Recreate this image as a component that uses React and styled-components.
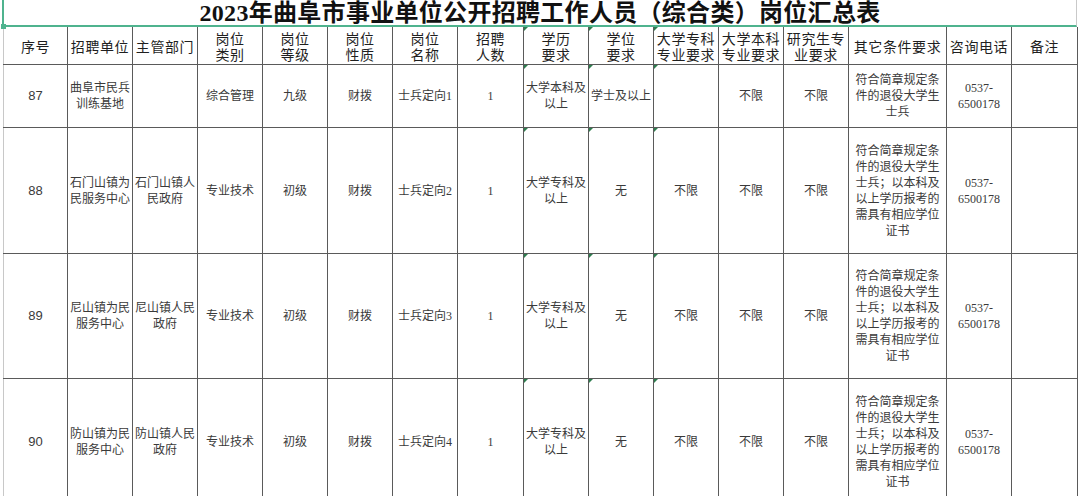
import styled, { createGlobalStyle } from "styled-components";

const GlobalStyle = createGlobalStyle`
  html, body {
    margin: 0;
    padding: 0;
    background: #ffffff;
  }
  body {
    font-family: "Noto Sans CJK SC", sans-serif;
  }
`;

const columns = [
  { title: "序号", width: 64 },
  { title: "招聘单位", width: 65 },
  { title: "主管部门", width: 65 },
  { title: "岗位\n类别", width: 65 },
  { title: "岗位\n等级", width: 65 },
  { title: "岗位\n性质", width: 65 },
  { title: "岗位\n名称", width: 65 },
  { title: "招聘\n人数", width: 66 },
  { title: "学历\n要求", width: 65, flag: true },
  { title: "学位\n要求", width: 65, flag: true },
  { title: "大学专科\n专业要求", width: 65, flag: true },
  { title: "大学本科\n专业要求", width: 65 },
  { title: "研究生专\n业要求", width: 65 },
  { title: "其它条件要求", width: 98 },
  { title: "咨询电话", width: 65 },
  { title: "备注", width: 66 },
];

const longNote =
  "符合简章规定条\n件的退役大学生\n士兵；以本科及\n以上学历报考的\n需具有相应学位\n证书";

const rows = [
  {
    height: 63,
    cells: [
      "87",
      "曲阜市民兵\n训练基地",
      "",
      "综合管理",
      "九级",
      "财拨",
      "士兵定向1",
      "1",
      "大学本科及\n以上",
      "学士及以上",
      "",
      "不限",
      "不限",
      "符合简章规定条\n件的退役大学生\n士兵",
      "0537-\n6500178",
      "",
    ],
  },
  {
    height: 126,
    cells: [
      "88",
      "石门山镇为\n民服务中心",
      "石门山镇人\n民政府",
      "专业技术",
      "初级",
      "财拨",
      "士兵定向2",
      "1",
      "大学专科及\n以上",
      "无",
      "不限",
      "不限",
      "不限",
      longNote,
      "0537-\n6500178",
      "",
    ],
  },
  {
    height: 125,
    cells: [
      "89",
      "尼山镇为民\n服务中心",
      "尼山镇人民\n政府",
      "专业技术",
      "初级",
      "财拨",
      "士兵定向3",
      "1",
      "大学专科及\n以上",
      "无",
      "不限",
      "不限",
      "不限",
      longNote,
      "0537-\n6500178",
      "",
    ],
  },
  {
    height: 126,
    cells: [
      "90",
      "防山镇为民\n服务中心",
      "防山镇人民\n政府",
      "专业技术",
      "初级",
      "财拨",
      "士兵定向4",
      "1",
      "大学专科及\n以上",
      "无",
      "不限",
      "不限",
      "不限",
      longNote,
      "0537-\n6500178",
      "",
    ],
  },
];

const App = () => {
  return (
    <>
      <GlobalStyle />
      <Sheet>
        <TitleBar>2023年曲阜市事业单位公开招聘工作人员（综合类）岗位汇总表</TitleBar>
        <Grid>
          <colgroup>
            {columns.map((c, i) => (
              <col key={i} style={{ width: c.width }} />
            ))}
          </colgroup>
          <thead>
            <tr>
              {columns.map((c, i) => (
                <HeadCell key={i} $flag={c.flag}>
                  {c.title}
                </HeadCell>
              ))}
            </tr>
          </thead>
          <tbody>
            {rows.map((r, ri) => (
              <BodyRow key={ri} $h={r.height}>
                {r.cells.map((text, ci) => (
                  <Cell key={ci} $sans={ci === 0} $flag={columns[ci].flag}>
                    {text}
                  </Cell>
                ))}
              </BodyRow>
            ))}
          </tbody>
        </Grid>
        <ScrollBar>
          <Thumb $w={130} />
          <Thumb $w={180} />
          <Thumb $w={210} />
        </ScrollBar>
      </Sheet>
    </>
  );
};

export default App;

const Sheet = styled.div`
  width: 1080px;
  height: 496px;
  overflow: hidden;
  display: flex;
  flex-direction: column;
  padding-left: 2px;
  box-sizing: border-box;
  background: #ffffff;
`;

const TitleBar = styled.div`
  width: 1075px;
  height: 29px;
  box-sizing: border-box;
  border-left: 2px solid #4fb38e;
  border-bottom: 2px solid #4fb38e;
  border-right: 1px solid #c9c9c9;
  display: flex;
  align-items: center;
  justify-content: center;
  padding-top: 1px;
  font-family: "Liberation Serif", "Noto Sans CJK SC", serif;
  font-weight: 700;
  font-size: 24px;
  letter-spacing: 0.3px;
  color: #111111;
  line-height: 1;
  position: relative;
  &::after {
    content: "";
    position: absolute;
    left: -3px;
    bottom: -4px;
    width: 5px;
    height: 5px;
    background: #4fb38e;
  }
`;

const Grid = styled.table`
  table-layout: fixed;
  border-collapse: collapse;
  width: 1074px;
  margin-left: 1px;
  flex: none;
`;

const HeadCell = styled.th`
  position: relative;
  height: 37px;
  padding: 0;
  border: 1px solid #5a5a5a;
  border-top: none;
  font-family: "Noto Sans CJK SC", sans-serif;
  font-weight: 400;
  font-size: 14px;
  line-height: 16px;
  letter-spacing: 0.6px;
  color: #1f1f1f;
  text-align: center;
  vertical-align: middle;
  white-space: pre-line;
  &:first-child {
    border-left-color: #c8c8c8;
  }
  &::before {
    content: "";
    display: ${(p) => (p.$flag ? "block" : "none")};
    position: absolute;
    left: 0;
    top: 0;
    border-top: 4px solid #2e7d4f;
    border-right: 4px solid transparent;
  }
`;

const BodyRow = styled.tr`
  height: ${(p) => p.$h}px;
`;

const Cell = styled.td`
  position: relative;
  padding: 0 1px;
  border: 1px solid #5a5a5a;
  font-family: ${(p) =>
    p.$sans
      ? `"Liberation Sans", "Noto Sans CJK SC", sans-serif`
      : `"Liberation Serif", "Noto Sans CJK SC", serif`};
  font-size: ${(p) => (p.$sans ? "13px" : "12px")};
  line-height: 16px;
  color: #3a3a3a;
  text-align: center;
  vertical-align: middle;
  white-space: pre-line;
  &:first-child {
    border-left-color: #c8c8c8;
  }
  &::before {
    content: "";
    display: ${(p) => (p.$flag ? "block" : "none")};
    position: absolute;
    left: 0;
    top: 0;
    border-top: 4px solid #2e7d4f;
    border-right: 4px solid transparent;
  }
`;

const ScrollBar = styled.div`
  flex: 1;
  min-height: 3px;
  background: #e4e4e4;
  display: flex;
  gap: 60px;
  padding-left: 100px;
`;

const Thumb = styled.div`
  width: ${(p) => p.$w}px;
  background: #f4f4f4;
`;
